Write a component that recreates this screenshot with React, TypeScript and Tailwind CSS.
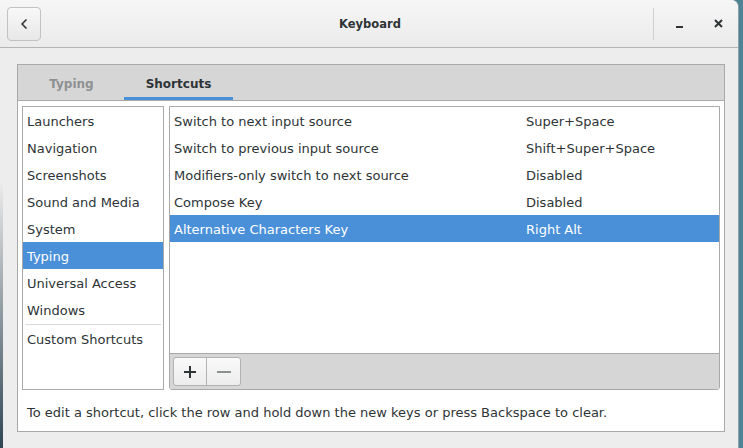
import { ChevronLeft } from 'lucide-react';

const categories = [
  'Launchers',
  'Navigation',
  'Screenshots',
  'Sound and Media',
  'System',
  'Typing',
  'Universal Access',
  'Windows',
];

const shortcuts = [
  { name: 'Switch to next input source', accel: 'Super+Space' },
  { name: 'Switch to previous input source', accel: 'Shift+Super+Space' },
  { name: 'Modifiers-only switch to next source', accel: 'Disabled' },
  { name: 'Compose Key', accel: 'Disabled' },
  { name: 'Alternative Characters Key', accel: 'Right Alt', selected: true },
];

function HeaderBar() {
  return (
    <div className="h-[48px] flex items-center border-b border-[#b4b4b4] bg-gradient-to-b from-[#f6f6f6] to-[#ebebeb] rounded-tr-[7px]">
      <div className="ml-[7px] w-[34px] h-[34px] rounded-[4px] border border-[#c2c2c2] bg-gradient-to-b from-[#f8f8f8] to-[#e8e8e8] flex items-center justify-center">
        <ChevronLeft className="w-[16px] h-[16px] text-[#2e3436]" strokeWidth={2.5} />
      </div>
      <div className="flex-1 text-center font-bold text-[11.5px] text-[#2e3436] pl-[46px] pt-[2px]">Keyboard</div>
      <div className="w-px h-[32px] bg-[#cfcfcf]" />
      <div className="w-[84px] flex items-center">
        <div className="ml-[22px] w-[7px] h-[2px] bg-[#2e3436] mt-[6px]" />
        <svg className="ml-[31px]" width="9" height="9" viewBox="0 0 9 9">
          <path d="M1 1 L8 8 M8 1 L1 8" stroke="#2e3436" strokeWidth="2" />
        </svg>
      </div>
    </div>
  );
}

function CategoryList() {
  return (
    <div className="w-[142px] h-[284px] border border-[#a9a9a9] bg-white flex flex-col">
      {categories.map((c) => (
        <div
          key={c}
          className={`h-[27px] flex items-center pl-[4px] pt-[2px] ${c === 'Typing' ? 'bg-[#4a90d9] text-white' : 'text-[#2e3436]'}`}
        >
          {c}
        </div>
      ))}
      <div className="h-[2px] flex items-center px-[2px]">
        <div className="h-px w-full bg-[#dcdcdc]" />
      </div>
      <div className="h-[27px] flex items-center pl-[4px] pt-[2px] text-[#2e3436]">Custom Shortcuts</div>
    </div>
  );
}

function ShortcutList() {
  return (
    <div className="w-[551px] h-[284px] border border-[#a9a9a9] rounded-b-[3px] bg-white flex flex-col overflow-hidden">
      <div className="flex-1 flex flex-col">
        {shortcuts.map((s) => (
          <div
            key={s.name}
            className={`h-[27px] flex items-center pl-[4px] pt-[2px] ${s.selected ? 'bg-[#4a90d9] text-white' : 'text-[#2e3436]'}`}
          >
            <span className="w-[352px]">{s.name}</span>
            <span>{s.accel}</span>
          </div>
        ))}
      </div>
      <div className="h-[36px] border-t border-[#a9a9a9] bg-[#d6d6d6] flex items-center pl-[3px]">
        <div className="flex h-[29px] rounded-[3px] border border-[#b2b2b2] bg-gradient-to-b from-[#fafafa] to-[#ececec]">
          <div className="w-[33px] flex items-center justify-center border-r border-[#b2b2b2]">
            <svg width="12" height="12" viewBox="0 0 12 12">
              <path d="M6 0 V12 M0 6 H12" stroke="#2e3436" strokeWidth="2" />
            </svg>
          </div>
          <div className="w-[33px] flex items-center justify-center">
            <svg width="14" height="12" viewBox="0 0 14 12">
              <path d="M0 6 H14" stroke="#8e9192" strokeWidth="2" />
            </svg>
          </div>
        </div>
      </div>
    </div>
  );
}

export default function App() {
  return (
    <div
      className="relative w-[743px] h-[448px] bg-[#4f8394] overflow-hidden text-[13px]"
      style={{ fontFamily: '"DejaVu Sans", sans-serif' }}
    >
      <div className="w-[739px] h-full bg-[#ededed] rounded-tr-[7px] border-r border-[#8c9ea6] flex flex-col">
        <HeaderBar />
        <div className="px-[17px] pt-[16px]">
          <div className="border border-[#a9a9a9] w-[708px] h-[368px] flex flex-col">
            <div className="h-[36px] bg-[#d6d6d6] border-b border-[#a9a9a9] flex pl-[9px] gap-[8px]">
              <div className="w-[89px] flex items-center justify-center font-bold text-[12px] text-[#8e9192] pt-[2px]">Typing</div>
              <div className="w-[109px] flex items-center justify-center font-bold text-[12px] text-[#2e3436] border-b-[3px] border-[#4a90d9] pt-[5px]">
                Shortcuts
              </div>
            </div>
            <div className="flex-1 bg-white px-[4px] pt-[5px]">
              <div className="flex gap-[5px]">
                <CategoryList />
                <ShortcutList />
              </div>
              <div className="pl-[5px] pt-[13px] text-[#2e3436]">
                To edit a shortcut, click the row and hold down the new keys or press Backspace to clear.
              </div>
            </div>
          </div>
        </div>
      </div>
      <div className="absolute left-0 top-[180px] w-[3px] h-[268px] bg-gradient-to-b from-transparent to-[#2f4554]" />
    </div>
  );
}
